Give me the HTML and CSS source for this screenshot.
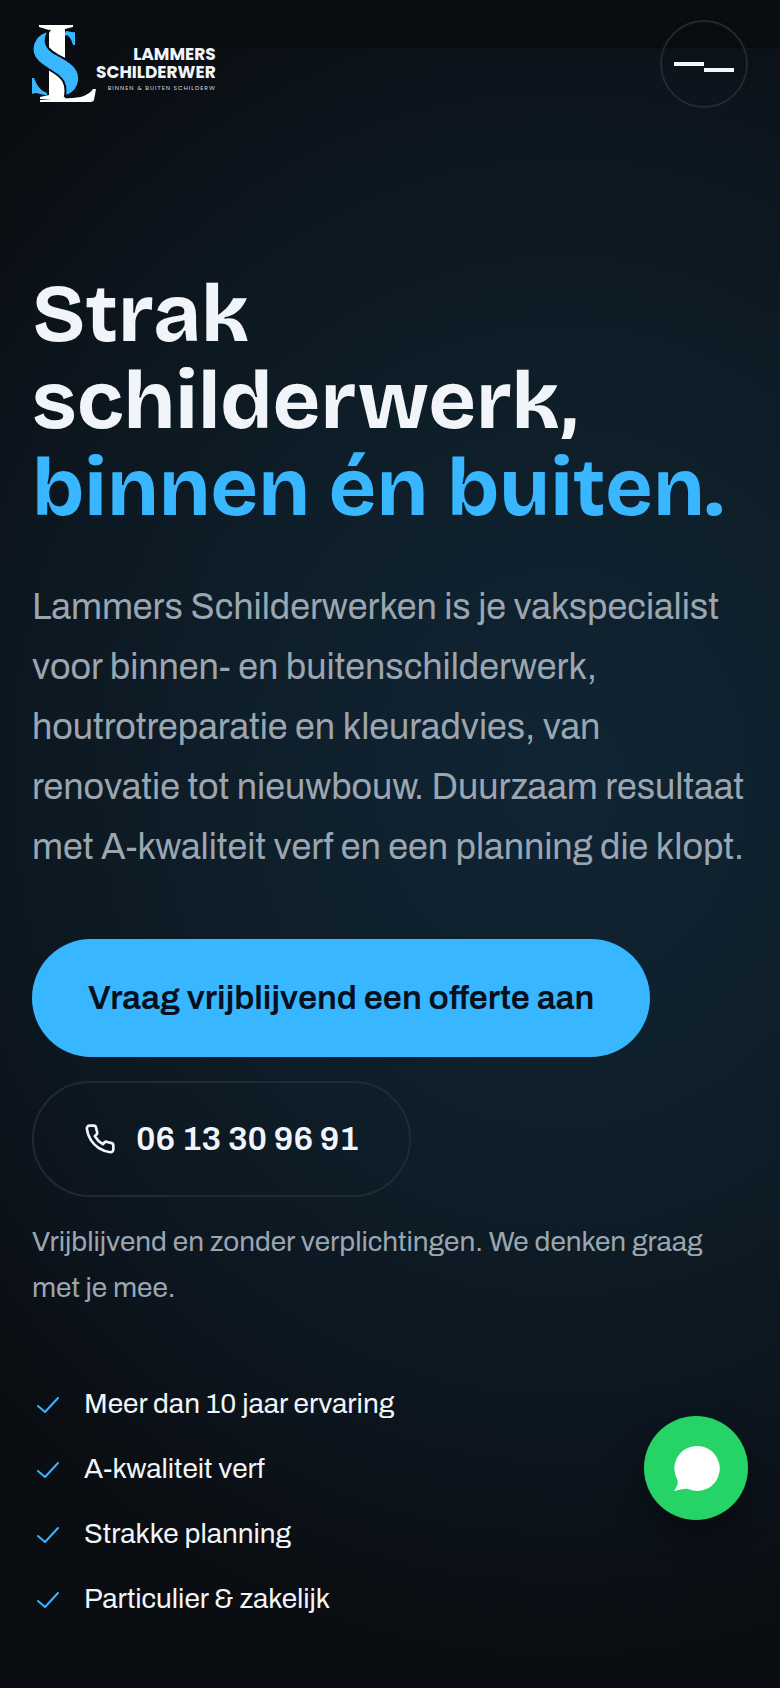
FILE: index.html
```html
<!DOCTYPE html>
<html lang="nl">
<head>
    <meta charset="UTF-8">
    <meta name="viewport" content="width=device-width, initial-scale=1.0">
    <title>Lammers Schilderwerken</title>
    <link rel="stylesheet" href="styles.css">
</head>
<body>
    <header class="header">
        <a class="logo" href="#" aria-label="Lammers Schilderwerken">
            <svg class="logo-mark" viewBox="0 0 64 78" aria-hidden="true">
                <path fill="#38b6ff" d="M43 7v13h-2C39 13 37 10 32 10l2-4c4 0 6 2 9 1zM0 53h2c3 8 7 13 13 15v2c-5 0-9-2-12-2l-3 1z"/>
                <path fill="#fff" d="M7 0h34v2l-8 2v70H8v-2l9-2V5L7 2z"/>
                <path fill="#fff" d="M30 73c17 1 26-2 31-9h3l-2 11c-1 2-3 2-5 2H8v-2z"/>
                <path fill="#38b6ff" stroke="#0a0e14" stroke-width="2" d="M17 6C5 8-1 18 1 28c2 9 11 13 20 19 10 6 14 12 12 24 13-3 17-17 12-26-4-8-13-11-21-16C13 23 11 15 17 6z"/>
            </svg>
            <span class="logo-text">
                <strong>LAMMERS</strong>
                <strong>SCHILDERWER</strong>
                <small>BINNEN &amp; BUITEN SCHILDERW</small>
            </span>
        </a>
        <button class="menu-button" type="button" aria-label="Menu">
            <span></span>
            <span></span>
        </button>
    </header>

    <main class="hero">
        <h1>Strak schilderwerk, <span>binnen én buiten.</span></h1>
        <p class="lead">Lammers Schilderwerken is je vakspecialist voor binnen- en buitenschilderwerk, houtrotreparatie en kleuradvies, van renovatie tot nieuwbouw. Duurzaam resultaat met A-kwaliteit verf en een planning die klopt.</p>
        <div class="actions">
            <a class="btn btn-primary" href="#offerte">Vraag vrijblijvend een offerte aan</a>
            <a class="btn btn-outline" href="tel:+31613309691">
                <svg viewBox="0 0 24 24" aria-hidden="true"><path d="M22 16.92v3a2 2 0 0 1-2.18 2 19.8 19.8 0 0 1-8.63-3.07 19.5 19.5 0 0 1-6-6A19.8 19.8 0 0 1 2.12 4.18 2 2 0 0 1 4.11 2h3a2 2 0 0 1 2 1.72c.13.96.36 1.9.7 2.81a2 2 0 0 1-.45 2.11L8.09 9.91a16 16 0 0 0 6 6l1.27-1.27a2 2 0 0 1 2.11-.45c.91.34 1.85.57 2.81.7A2 2 0 0 1 22 16.92z"/></svg>
                06 13 30 96 91
            </a>
        </div>
        <p class="note">Vrijblijvend en zonder verplichtingen. We denken graag met je mee.</p>
        <ul class="usps">
            <li><svg viewBox="0 0 32 32" aria-hidden="true"><path d="M26 10 13 24l-7-6"/></svg>Meer dan 10 jaar ervaring</li>
            <li><svg viewBox="0 0 32 32" aria-hidden="true"><path d="M26 10 13 24l-7-6"/></svg>A-kwaliteit verf</li>
            <li><svg viewBox="0 0 32 32" aria-hidden="true"><path d="M26 10 13 24l-7-6"/></svg>Strakke planning</li>
            <li><svg viewBox="0 0 32 32" aria-hidden="true"><path d="M26 10 13 24l-7-6"/></svg>Particulier &amp; zakelijk</li>
        </ul>
    </main>

    <a class="whatsapp" href="#whatsapp" aria-label="WhatsApp">
        <svg viewBox="0 0 48 48" aria-hidden="true"><path d="M25 2a22.500 22.500 0 1 1-9 43c-3-1-8 1-14 2 3-4 5-8 3-12A22.500 22.500 0 0 1 25 2z"/></svg>
    </a>
</body>
</html>
```
FILE: styles.css
```css
* {
    box-sizing: border-box;
}
body {
    margin: 0;
    min-height: 100vh;
    font-family: Archivo, "Liberation Sans", Arial, sans-serif;
    color: #f1f5f9;
    background-color: #0a0d11;
    background-image:
        linear-gradient(#090d11, #090d11),
        radial-gradient(ellipse 100% 52% at 72% 46%, #102434 0%, #0e1f2a 40%, #0c151e 78%, #0a0d11 100%);
    background-repeat: no-repeat;
    background-size: 100% 48px, 100% 100%;
}
a {
    color: inherit;
    text-decoration: none;
}
.header {
    display: flex;
    justify-content: space-between;
    align-items: center;
    padding: 20px 32px;
}
.logo {
    display: flex;
    align-items: center;
}
.logo-mark {
    width: 64px;
    height: 78px;
}
.logo-text {
    display: flex;
    flex-direction: column;
    align-items: flex-end;
    padding-top: 12px;
    font-family: Poppins, "Liberation Sans", sans-serif;
    line-height: 18px;
    white-space: nowrap;
}
.logo-text strong {
    font-size: 17px;
    font-weight: 700;
}
.logo-text small {
    font-size: 6px;
    line-height: 14px;
    letter-spacing: 1px;
    color: #d5d8dc;
}
.menu-button {
    display: flex;
    justify-content: center;
    align-items: center;
    width: 88px;
    height: 88px;
    padding: 0;
    background: transparent;
    border: 2px solid #24292f;
    border-radius: 50%;
    cursor: pointer;
}
.menu-button span {
    width: 30px;
    height: 4px;
    background-color: #f4f7fa;
}
.menu-button span + span {
    margin-top: 12px;
}
.hero {
    padding: 143px 32px 52px;
}
h1 {
    margin: 0;
    font-family: "Bricolage Grotesque", Archivo, "Liberation Sans", sans-serif;
    font-size: 82px;
    line-height: 87px;
    font-weight: 700;
}
h1 span {
    display: block;
    color: #38b6ff;
}
.lead {
    margin: 45px 0 62px;
    font-size: 36px;
    line-height: 60px;
    color: #9ba6b1;
}
.actions {
    display: flex;
    flex-wrap: wrap;
    gap: 24px;
}
.btn {
    display: inline-flex;
    align-items: center;
    gap: 20px;
    padding: 39px 56px;
    font-size: 34px;
    line-height: 40px;
    font-weight: 600;
    border-radius: 60px;
}
.btn-primary {
    color: #07101c;
    background-color: #38b6ff;
}
.btn-outline {
    padding: 36px 50px;
    border: 2px solid #1f2a33;
}
.btn svg {
    width: 32px;
    height: 32px;
    fill: none;
    stroke: currentColor;
    stroke-width: 2;
    stroke-linejoin: round;
}
.note {
    margin: 22px 0 70px;
    font-size: 28px;
    line-height: 46px;
    color: #9ba6b1;
}
.usps {
    display: flex;
    flex-direction: column;
    gap: 19px;
    margin: 0;
    padding: 0;
    list-style: none;
    font-size: 28px;
    line-height: 46px;
}
.usps li {
    display: flex;
    align-items: center;
    gap: 20px;
}
.usps svg {
    width: 32px;
    height: 32px;
    fill: none;
    stroke: #38b6ff;
    stroke-width: 2;
    stroke-linecap: round;
    stroke-linejoin: round;
}
.whatsapp {
    position: fixed;
    right: 32px;
    bottom: 168px;
    display: flex;
    justify-content: center;
    align-items: center;
    width: 104px;
    height: 104px;
    background-color: #25d366;
    border-radius: 50%;
    box-shadow: 0 12px 32px rgba(0, 0, 0, 0.4);
}
.whatsapp svg {
    width: 48px;
    height: 48px;
    fill: #fff;
}
```
